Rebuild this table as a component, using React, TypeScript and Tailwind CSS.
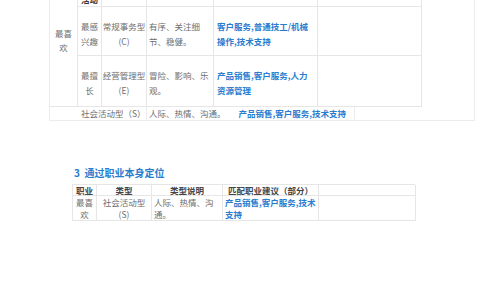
import React from 'react';

const cell = 'border-r border-b border-[#e6e6e6]';
const gray = 'text-[#6e6e6e]';
const blue = 'text-[#2a7ccf] font-bold';

const App = () => {
  return (
    <div className="w-[484px] h-[300px] overflow-hidden bg-white text-[8.5px] leading-[15px] [font-family:'Noto_Sans_CJK_SC','Liberation_Sans',sans-serif]">
      {/* Top table (cut off) */}
      <div className="ml-[49px] w-[426px] h-[121px] border-l border-r border-b border-[#ececec]">
        <div className="grid grid-cols-[28px_24px_45px_67px_104px_104px] grid-rows-[7px_49px_51px] w-[372px]">
          <div className={`${cell} row-span-3 ${gray} text-center pt-[26px] px-[3px] leading-[14px]`}>最喜欢</div>

          <div className={`${cell} h-[7px] overflow-hidden flex items-end justify-center`}>
            <span className="font-bold text-[#333] leading-[12px] mb-[1px]">活动</span>
          </div>
          <div className={cell}></div>
          <div className={cell}></div>
          <div className={cell}></div>
          <div className={cell}></div>

          <div className={`${cell} ${gray} flex items-center justify-center text-center pt-[5px] px-[2px]`}>最感兴趣</div>
          <div className={`${cell} ${gray} flex items-center justify-center text-center pt-[5px]`}>常规事务型<br />(C)</div>
          <div className={`${cell} ${gray} flex items-center pt-[5px] pl-[2px] pr-[6px]`}>有序、关注细节、稳健。</div>
          <div className={`${cell} ${blue} flex items-center pt-[5px] pl-[3px] pr-[8px]`}>客户服务,普通技工/机械操作,技术支持</div>
          <div className={cell}></div>

          <div className={`${cell} ${gray} flex items-center justify-center text-center pt-[4px] px-[2px]`}>最擅长</div>
          <div className={`${cell} ${gray} flex items-center justify-center text-center pt-[4px]`}>经营管理型<br />(E)</div>
          <div className={`${cell} ${gray} flex items-center pt-[4px] pl-[2px] pr-[4px]`}>冒险、影响、乐观。</div>
          <div className={`${cell} ${blue} flex items-center pt-[4px] pl-[3px] pr-[8px]`}>产品销售,客户服务,人力资源管理</div>
          <div className={cell}></div>
        </div>

        <div className="flex h-[13px] pl-[28px] leading-[13px]">
          <div className={`w-[69px] border-r border-[#ececec] ${gray} pl-[3px] whitespace-nowrap`}>社会活动型（S）</div>
          <div className="w-[208px] border-r border-[#ececec] flex pl-[2px] whitespace-nowrap">
            <span className={gray}>人际、热情、沟通。</span>
            <span className={`${blue} ml-[13px]`}>产品销售,客户服务,技术支持</span>
          </div>
        </div>
      </div>

      {/* Section heading */}
      <div className="ml-[74px] mt-[45px] text-[10px] leading-[14px] font-bold text-[#2a7ccf]">
        3&nbsp;&nbsp;通过职业本身定位
      </div>

      {/* Bottom table */}
      <div className="ml-[72px] mt-[4px] w-[343px] border-l border-t border-[#e6e6e6] grid grid-cols-[24px_55px_71px_96px_97px] grid-rows-[11px_25px] leading-[12px]">
        <div className={`${cell} text-center font-bold text-[#444] leading-[10px]`}>职业</div>
        <div className={`${cell} text-center font-bold text-[#444] leading-[10px]`}>类型</div>
        <div className={`${cell} text-center font-bold text-[#444] leading-[10px]`}>类型说明</div>
        <div className={`${cell} text-center font-bold text-[#444] leading-[10px]`}>匹配职业建议（部分）</div>
        <div className={cell}></div>

        <div className={`${cell} ${gray} text-center px-[2px]`}>最喜欢</div>
        <div className={`${cell} ${gray} text-center`}>社会活动型<br />(S)</div>
        <div className={`${cell} ${gray} pl-[2px] pr-[4px]`}>人际、热情、沟通。</div>
        <div className={`${cell} ${blue} pl-[2px] pr-[2px]`}>产品销售,客户服务,技术支持</div>
        <div className={cell}></div>
      </div>
    </div>
  );
};

export default App;
